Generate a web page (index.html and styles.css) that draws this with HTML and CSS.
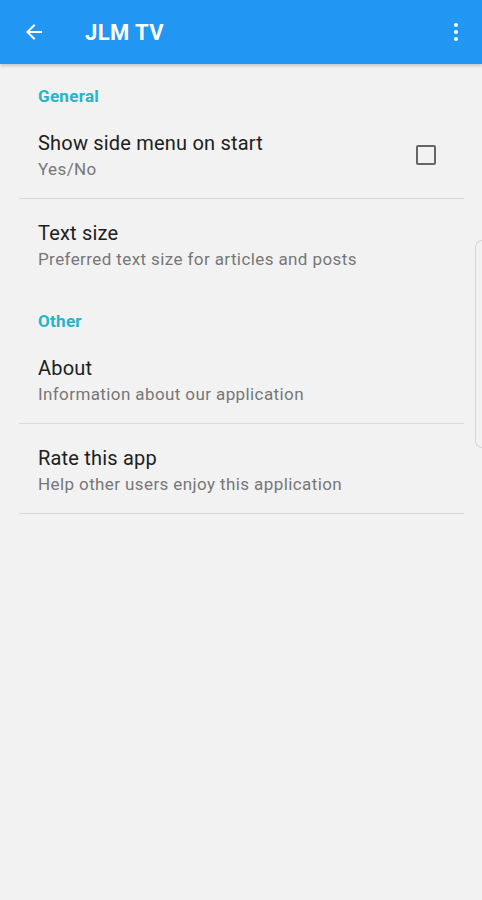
FILE: index.html
```html
<!DOCTYPE html>
<html lang="en">
<head>
    <meta charset="UTF-8">
    <meta name="viewport" content="width=device-width, initial-scale=1.0">
    <title>JLM TV - Settings</title>
    <link rel="stylesheet" href="styles.css">
</head>
<body>
    <header class="app-bar">
        <div class="app-bar-back">
            <svg viewBox="0 0 24 24">
                <path d="M20 11H7.83l5.59-5.59L12 4l-8 8 8 8 1.41-1.41L7.83 13H20v-2z"></path>
            </svg>
        </div>
        <div class="app-bar-title">JLM TV</div>
        <div class="app-bar-menu">
            <svg viewBox="0 0 24 24">
                <circle cx="12" cy="5" r="2"></circle>
                <circle cx="12" cy="12" r="2"></circle>
                <circle cx="12" cy="19" r="2"></circle>
            </svg>
        </div>
    </header>

    <main class="prefs">
        <div class="pref-category">General</div>
        <div class="pref-item with-divider">
            <div class="pref-text">
                <div class="pref-title">Show side menu on start</div>
                <div class="pref-summary">Yes/No</div>
            </div>
            <div class="pref-checkbox"></div>
        </div>
        <div class="pref-item">
            <div class="pref-text">
                <div class="pref-title">Text size</div>
                <div class="pref-summary">Preferred text size for articles and posts</div>
            </div>
        </div>

        <div class="pref-category">Other</div>
        <div class="pref-item with-divider">
            <div class="pref-text">
                <div class="pref-title">About</div>
                <div class="pref-summary">Information about our application</div>
            </div>
        </div>
        <div class="pref-item with-divider">
            <div class="pref-text">
                <div class="pref-title">Rate this app</div>
                <div class="pref-summary">Help other users enjoy this application</div>
            </div>
        </div>
    </main>

    <!-- панель Edge у правого края -->
    <div class="edge-handle"></div>
</body>
</html>
```

FILE: styles.css
```css
body {
    font-family: Roboto, "Liberation Sans", Arial, sans-serif;
    margin: 0;
    background-color: #f2f2f2;
    min-height: 900px;
    position: relative;
}

.app-bar {
    height: 64px;
    background-color: #2196f3;
    display: flex;
    align-items: center;
    box-shadow: 0 2px 3px rgba(0,0,0,0.18);
    position: relative;
    z-index: 1;
}

.app-bar-back {
    width: 24px;
    height: 24px;
    margin-left: 22px;
}

.app-bar-back svg,
.app-bar-menu svg {
    width: 24px;
    height: 24px;
    fill: white;
    display: block;
}

.app-bar-title {
    margin-left: 39px;
    color: white;
    font-size: 22px;
    font-weight: 700;
    letter-spacing: 0.4px;
    flex: 1;
}

.app-bar-menu {
    width: 24px;
    height: 24px;
    margin-right: 14px;
}

.pref-category {
    padding: 22px 0 3px 38px;
    line-height: 20px;
    font-size: 17px;
    font-weight: 700;
    letter-spacing: 0.3px;
    color: #25b5c8;
}

.pref-item {
    margin: 0 18px 0 19px;
    padding: 22px 28px 18px 19px;
    display: flex;
    align-items: center;
    border-bottom: 1px solid transparent;
}

.pref-item.with-divider {
    border-bottom-color: #dadada;
}

.pref-text {
    flex: 1;
}

.pref-title {
    font-size: 20px;
    line-height: 24px;
    letter-spacing: 0.2px;
    color: #202020;
}

.pref-summary {
    margin-top: 3px;
    font-size: 17px;
    line-height: 22px;
    letter-spacing: 0.4px;
    color: #777777;
}

.pref-checkbox {
    width: 16px;
    height: 16px;
    border: 2px solid #666666;
    border-radius: 2px;
    margin-top: -2px;
}

.edge-handle {
    position: absolute;
    top: 240px;
    right: 0;
    width: 6px;
    height: 206px;
    border: 1px solid #d6d6d6;
    border-right: none;
    border-radius: 8px 0 0 8px;
}
```
